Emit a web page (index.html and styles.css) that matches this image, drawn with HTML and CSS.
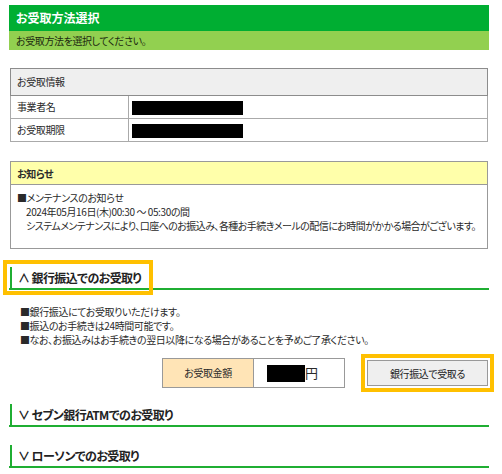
FILE: index.html
```html
<!DOCTYPE html>
<html lang="ja">
<head>
    <meta charset="UTF-8">
    <meta name="viewport" content="width=device-width, initial-scale=1.0">
    <title>お受取方法選択</title>
    <link rel="stylesheet" href="styles.css">
</head>
<body>
    <div class="page">
        <div class="title-bar">
            <h1>お受取方法選択</h1>
            <p>お受取方法を選択してください。</p>
        </div>

        <table class="info">
            <colgroup>
                <col class="col-label">
                <col>
            </colgroup>
            <tr>
                <th colspan="2">お受取情報</th>
            </tr>
            <tr>
                <td class="label">事業者名</td>
                <td><span class="masked"></span></td>
            </tr>
            <tr>
                <td class="label">お受取期限</td>
                <td><span class="masked"></span></td>
            </tr>
        </table>

        <div class="notice">
            <div class="notice-head">お知らせ</div>
            <div class="notice-body">
                <p>■メンテナンスのお知らせ</p>
                <p class="indent">2024年05月16日(木)00:30 ～ 05:30の間</p>
                <p class="indent long">システムメンテナンスにより、口座へのお振込み、各種お手続きメールの配信にお時間がかかる場合がございます。</p>
            </div>
        </div>

        <div class="section">
            <h3 class="section-head"><span class="head-label highlight">∧ 銀行振込でのお受取り</span></h3>
            <ul class="notes">
                <li>■銀行振込にてお受取りいただけます。</li>
                <li>■振込のお手続きは24時間可能です。</li>
                <li>■なお、お振込みはお手続きの翌日以降になる場合があることを予めご了承ください。</li>
            </ul>
            <div class="amount-row">
                <div class="amount">
                    <div class="amount-label">お受取金額</div>
                    <div class="amount-value"><span class="masked small"></span>円</div>
                </div>
                <button class="receive-btn">銀行振込で受取る</button>
            </div>
        </div>

        <div class="section">
            <h3 class="section-head"><span class="head-label">∨ セブン銀行ATMでのお受取り</span></h3>
        </div>

        <div class="section">
            <h3 class="section-head"><span class="head-label">∨ ローソンでのお受取り</span></h3>
        </div>
    </div>
</body>
</html>
```

FILE: styles.css
```css
* {
    box-sizing: border-box;
}
body {
    font-family: 'Noto Sans CJK JP', 'Noto Sans', sans-serif;
    font-feature-settings: "palt";
    font-size: 10px;
    letter-spacing: -0.4px;
    line-height: 14px;
    color: #2a2a2a;
    background-color: #fff;
    margin: 0;
    padding: 0;
}
p {
    margin: 0;
}
.page {
    width: 480px;
    margin: 0 0 0 9px;
    padding-top: 5px;
}
.title-bar h1 {
    margin: 0;
    height: 26px;
    line-height: 26px;
    padding-left: 7px;
    font-size: 12px;
    letter-spacing: 0;
    font-weight: bold;
    color: #fff;
    background-color: #00ae32;
}
.title-bar p {
    height: 19px;
    line-height: 19px;
    padding-left: 7px;
    background-color: #92d050;
    color: #1d2a10;
}
.info {
    width: 478px;
    margin: 18px 0 0 1px;
    border-collapse: collapse;
    table-layout: fixed;
    border: 1px solid #8c8c8c;
}
.info .col-label {
    width: 118px;
}
.info th {
    height: 27px;
    padding: 0 6px;
    text-align: left;
    font-weight: normal;
    background-color: #efefef;
    border-bottom: 1px solid #8c8c8c;
}
.info td {
    height: 23px;
    padding: 0 2px 0 3px;
    border: 1px solid #aaa;
}
.info td.label {
    padding-left: 6px;
}
.masked {
    display: inline-block;
    width: 111px;
    height: 14px;
    background-color: #000;
    vertical-align: middle;
}
.masked.small {
    width: 38px;
    height: 17px;
}
.notice {
    margin: 19px 0 0 1px;
    width: 478px;
    border: 1px solid #999;
}
.notice-head {
    height: 23px;
    line-height: 23px;
    padding-left: 6px;
    font-weight: bold;
    background-color: #ffffaa;
    border-bottom: 1px solid #999;
}
.notice-body {
    padding: 6px 6px 15px 6px;
}
.notice-body .indent {
    padding-left: 9px;
}
.notice-body .long {
    letter-spacing: -0.55px;
    white-space: nowrap;
}
.section {
    margin-top: 18px;
}
.section-head {
    display: flex;
    margin: 0;
    font-size: 12px;
    letter-spacing: -0.6px;
    font-weight: bold;
    line-height: 21px;
    color: #222;
    border-bottom: 2px solid #1fae32;
    padding-left: 1px;
}
.head-label {
    height: 21px;
    padding: 0 5px 0 6px;
    border-left: 2px solid #1fae32;
}
.highlight {
    outline: 4px solid #ffc000;
    outline-offset: 3px;
}
.notes {
    list-style: none;
    margin: 15px 0 0 0;
    padding: 0 0 0 11px;
}
.amount-row {
    display: flex;
    justify-content: flex-end;
    align-items: center;
    gap: 22px;
    margin-top: 11px;
    margin-bottom: -2px;
    padding-right: 1px;
}
.amount {
    display: flex;
}
.amount-label,
.amount-value {
    height: 30px;
    border: 1px solid #999;
    display: flex;
    align-items: center;
}
.amount-label {
    width: 91px;
    justify-content: center;
    background-color: #ffe4b6;
    border-right: none;
}
.amount-value {
    width: 92px;
    font-size: 13px;
    padding-left: 13px;
}
.receive-btn {
    width: 121px;
    height: 26px;
    font-family: inherit;
    font-feature-settings: "palt";
    font-size: 10px;
    letter-spacing: -0.4px;
    color: #222;
    background-color: #efefef;
    border: 1px solid #999;
    outline: 4px solid #ffc000;
    outline-offset: 2px;
}
```
